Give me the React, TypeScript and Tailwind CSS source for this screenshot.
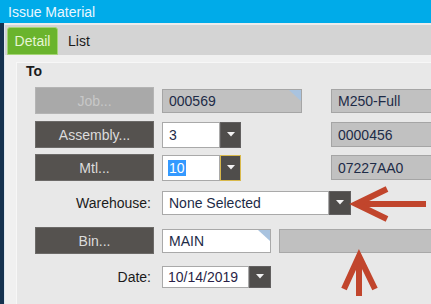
import React from 'react';

const Caret = () => (
  <svg width="8" height="5" viewBox="0 0 8 5">
    <path d="M0 0h8L4 4.5z" fill="#f2f2f2" />
  </svg>
);

const Corner = () => (
  <svg className="absolute top-0 right-0" width="12" height="11" viewBox="0 0 12 11">
    <path d="M0 0h12v11z" fill="#a9c3df" />
  </svg>
);

const Btn = ({ label, disabled = false }: { label: string; disabled?: boolean }) => (
  <div
    className={
      disabled
        ? 'w-[119px] h-[27px] shrink-0 flex items-center justify-center bg-[#a9a9a9] border border-[#b4b4b4] text-[#c7c7c7]'
        : 'w-[119px] h-[27px] shrink-0 flex items-center justify-center bg-[#55524f] border border-[#6c6a68] text-[#dcdcdc]'
    }
  >
    {label}
  </div>
);

const Label = ({ text }: { text: string }) => (
  <div className="w-[119px] shrink-0 text-right pr-[3px] text-[#1b1b1b]">{text}</div>
);

const ReadOnly = ({ value, w, h = 'h-[24px]', corner = false }: { value: string; w: string; h?: string; corner?: boolean }) => (
  <div className={`${w} ${h} shrink-0 relative flex items-center pl-[6px] bg-[#c1c1c1] border border-[#a5a5a5] text-[#1d2b47]`}>
    {value}
    {corner && <Corner />}
  </div>
);

const App = () => {
  return (
    <div className="relative w-[431px] h-[304px] overflow-hidden flex flex-col text-[14px] leading-[16px] font-['Liberation_Sans',Arial,sans-serif]">
      <div className="h-[23px] shrink-0 bg-[#00abe9] text-[#eaf7ff] flex items-center pl-[8px]">Issue Material</div>

      <div className="flex flex-1 min-w-0">
        <div className="w-[4px] shrink-0 bg-[#15324f]" />
        <div className="w-px shrink-0 bg-[#dde7ee]" />
        <div className="flex-1 min-w-0 flex flex-col bg-[#f0f0f0]">
          <div className="h-[2px] shrink-0 bg-[#ececec]" />
          <div className="h-[30px] shrink-0 bg-[#d4d4d4] flex items-end pl-[2px]">
            <div className="w-[51px] h-[28px] flex items-center justify-center bg-[#6ab42d] border border-[#a5d477] rounded-t-[3px] text-[#e6f5d4]">
              Detail
            </div>
            <div className="ml-[10px] h-[28px] flex items-center text-[#1b1b1b]">List</div>
          </div>
          <div className="h-[7px] shrink-0" />

          <div className="flex-1 ml-[11px] bg-[#e8e8e8] border-t border-l border-[#f7f7f7]">
            <div className="pl-[9px] font-bold text-[#1b1b1b]">To</div>

            <div className="pl-[18px] flex flex-col">
              <div className="mt-[8px] h-[27px] flex items-center">
                <Btn label="Job..." disabled />
                <div className="ml-[8px] shrink-0">
                  <ReadOnly value="000569" w="w-[140px]" corner />
                </div>
                <div className="ml-[29px] shrink-0">
                  <ReadOnly value="M250-Full" w="w-[120px]" />
                </div>
              </div>

              <div className="mt-[7px] h-[27px] flex items-center">
                <Btn label="Assembly..." />
                <div className="ml-[8px] flex shrink-0">
                  <div className="w-[58px] h-[26px] flex items-center pl-[6px] bg-white border border-[#a9a9a9] text-[#1d2b47]">3</div>
                  <div className="w-[21px] h-[26px] flex items-center justify-center bg-[#4f4d4b] border border-[#626060]">
                    <Caret />
                  </div>
                </div>
                <div className="ml-[90px] shrink-0">
                  <ReadOnly value="0000456" w="w-[120px]" h="h-[25px]" />
                </div>
              </div>

              <div className="mt-[6px] h-[27px] flex items-center">
                <Btn label="Mtl..." />
                <div className="ml-[8px] flex shrink-0">
                  <div className="w-[58px] h-[26px] flex items-center pl-[5px] bg-white border border-[#a9a9a9]">
                    <span className="bg-[#3399ff] text-white px-px">10</span>
                  </div>
                  <div className="w-[21px] h-[26px] flex items-center justify-center bg-[#4f4d4b] border border-[#d9b94c]">
                    <Caret />
                  </div>
                </div>
                <div className="ml-[90px] shrink-0">
                  <ReadOnly value="07227AA0" w="w-[120px]" h="h-[25px]" />
                </div>
              </div>

              <div className="mt-[8px] h-[27px] flex items-center">
                <Label text="Warehouse:" />
                <div className="ml-[8px] flex shrink-0">
                  <div className="w-[167px] h-[24px] flex items-center pl-[6px] bg-white border border-[#a9a9a9] text-[#1d2b47]">None Selected</div>
                  <div className="w-[22px] h-[24px] flex items-center justify-center bg-[#4f4d4b] border border-[#626060]">
                    <Caret />
                  </div>
                </div>
              </div>

              <div className="mt-[11px] h-[27px] flex items-center">
                <Btn label="Bin..." />
                <div className="ml-[8px] w-[109px] h-[24px] shrink-0 relative flex items-center pl-[6px] bg-white border border-[#a9a9a9] text-[#1d2b47]">
                  MAIN
                  <Corner />
                </div>
                <div className="ml-[8px] w-[160px] h-[24px] shrink-0 bg-[#c0c0c0] border border-[#a8a8a8]" />
              </div>

              <div className="mt-[9px] h-[27px] flex items-center">
                <Label text="Date:" />
                <div className="ml-[8px] flex shrink-0">
                  <div className="w-[87px] h-[22px] flex items-center pl-[5px] bg-white border border-[#a9a9a9] text-[#2a1f47]">10/14/2019</div>
                  <div className="w-[22px] h-[22px] flex items-center justify-center bg-[#4f4d4b] border border-[#626060]">
                    <Caret />
                  </div>
                </div>
              </div>
            </div>
          </div>
        </div>
      </div>

      <svg className="absolute inset-0 pointer-events-none" width="431" height="304" viewBox="0 0 431 304">
        <g stroke="#c1452c" strokeWidth="6" strokeLinecap="butt" fill="none">
          <path d="M356 204H426" />
          <path d="M387 189L356 204L387 219" />
          <path d="M359 258V296" />
          <path d="M344 289L359 256L375 289" />
        </g>
      </svg>
    </div>
  );
};

export default App;
